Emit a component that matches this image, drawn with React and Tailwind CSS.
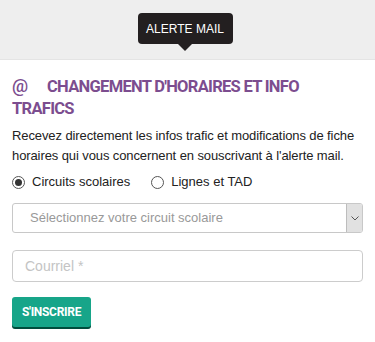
import React from "react";

export default function App() {
  return (
    <div className="w-[375px] h-[342px] bg-white overflow-hidden font-['Liberation_Sans',Arial,sans-serif]">
      <div className="h-[60px] bg-[#eeeeee] border-b border-[#e4e4e4] flex justify-center pt-[13px]">
        <div className="relative ml-[-5px] h-[31px] w-[95px] rounded-[4px] bg-[#231f20] text-white text-[12px] flex items-center justify-center">
          ALERTE MAIL
          <div className="absolute left-1/2 -translate-x-1/2 top-full w-0 h-0 border-l-[7px] border-r-[7px] border-t-[7px] border-l-transparent border-r-transparent border-t-[#231f20]"></div>
        </div>
      </div>
      <div className="px-3">
        <h2 className="mt-[15px] text-[#7c4d8f] font-bold text-[16.5px] leading-[22px] tracking-[-0.7px] font-['Roboto',sans-serif]">
          <span className="inline-block w-[35px] font-medium text-[18px]">@</span>CHANGEMENT D'HORAIRES ET INFO TRAFICS
        </h2>
        <p className="mt-[6px] text-[13px] leading-[20px] tracking-[-0.1px] text-[#222]">
          Recevez directement les infos trafic et modifications de fiche horaires qui vous concernent en souscrivant à l'alerte mail.
        </p>
        <div className="mt-[6px] flex items-center text-[13px] text-[#222] h-[20px]">
          <span className="w-[13px] h-[13px] rounded-full border border-[#555] flex items-center justify-center">
            <span className="w-[7px] h-[7px] rounded-full bg-[#333]"></span>
          </span>
          <span className="ml-[7px]">Circuits scolaires</span>
          <span className="ml-[21px] w-[13px] h-[13px] rounded-full border border-[#555]"></span>
          <span className="ml-[7px]">Lignes et TAD</span>
        </div>
        <div className="mt-[11px] h-[30px] flex border border-[#c8c8c8] rounded-[3px] overflow-hidden">
          <div className="flex-1 flex items-center pl-[17px] text-[13px] text-[#999]">Sélectionnez votre circuit scolaire</div>
          <div className="w-[16px] bg-[#e1e1e1] border-l border-[#bdbdbd] flex items-center justify-center">
            <svg width="8" height="5" viewBox="0 0 8 5" fill="none"><path d="M0.5 0.5 L4 4 L7.5 0.5" stroke="#555" strokeWidth="1"/></svg>
          </div>
        </div>
        <div className="mt-[17px] h-[32px] border border-[#cccccc] rounded-[4px] flex items-center pl-[12px] text-[14px] text-[#c4c4c4]">
          Courriel *
        </div>
        <div className="mt-[15px] w-[79px] h-[30px] bg-[#17a589] rounded-[3px] shadow-[0_2px_0_#004d3d] flex items-center justify-center text-white font-bold text-[12px] tracking-[-0.3px] font-['Roboto',sans-serif]">
          S'INSCRIRE
        </div>
      </div>
    </div>
  );
}
